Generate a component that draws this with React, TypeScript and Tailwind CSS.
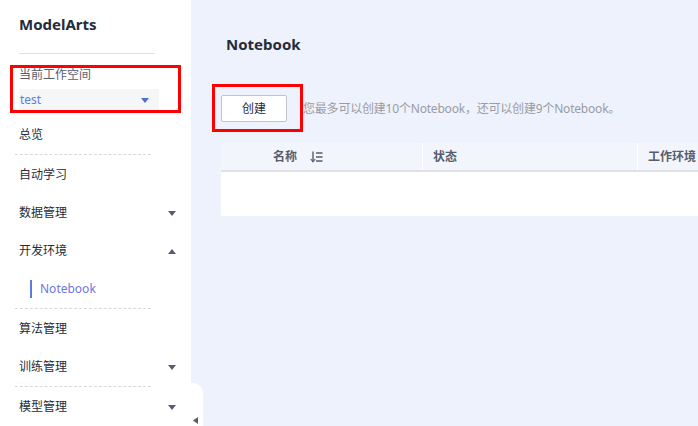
import React from "react";

const font = { fontFamily: '"Noto Sans", "Noto Sans CJK SC", sans-serif' };

const Caret = ({ up = false, className = "" }: { up?: boolean; className?: string }) => (
    <svg width="8" height="5" viewBox="0 0 8 5" className={className}>
        {up ? <path d="M0 5 L4 0 L8 5 Z" fill="currentColor" /> : <path d="M0 0 L8 0 L4 5 Z" fill="currentColor" />}
    </svg>
);

const NavItem = ({ label, caret }: { label: string; caret?: "up" | "down" }) => (
    <div className="h-[38px] flex items-center justify-between pl-[19px] pr-[15px] text-[12px] text-[#252b3a]">
        <span>{label}</span>
        {caret && <Caret up={caret === "up"} className="text-[#575d6c]" />}
    </div>
);

const Dashed = () => <div className="ml-[15px] w-[136px] border-t border-dashed border-[#d5d8de] mb-[1px]"></div>;

const App = () => {
    return (
        <div className="relative flex w-full h-[426px] overflow-hidden bg-[#eef2fc]" style={font}>
            {/* sidebar */}
            <div className="w-[191px] shrink-0 bg-white flex flex-col">
                <div className="h-[50px] flex items-center pl-[19px] text-[15px] font-bold text-[#252b3a]">ModelArts</div>
                <div className="ml-[19px] w-[136px] border-t border-[#dfe1e6] mt-[4px]"></div>
                <div className="pl-[19px] mt-[13px] text-[12px] text-[#575d6c] leading-[16px]">当前工作空间</div>
                <div className="ml-[19px] mt-[6px] w-[140px] h-[24px] bg-[#f5f6f7] flex items-center justify-between pl-[1px] pr-[10px]">
                    <span className="text-[12px] text-[#5e7ce0]">test</span>
                    <Caret className="text-[#526ecc]" />
                </div>
                <div className="mt-[4px]">
                    <NavItem label="总览" />
                    <Dashed />
                    <NavItem label="自动学习" />
                    <NavItem label="数据管理" caret="down" />
                    <NavItem label="开发环境" caret="up" />
                    <div className="h-[38px] flex items-center pl-[30px]">
                        <div className="w-[2px] h-[18px] bg-[#5e7ce0] mr-[8px]"></div>
                        <span className="text-[12px] text-[#6e76e0]">Notebook</span>
                    </div>
                    <Dashed />
                    <NavItem label="算法管理" />
                    <NavItem label="训练管理" caret="down" />
                    <Dashed />
                    <NavItem label="模型管理" caret="down" />
                </div>
            </div>

            {/* main */}
            <div className="flex-1 flex flex-col pl-[30px] overflow-hidden">
                <div className="h-[88px] pt-[33px] pl-[5px] text-[15px] font-bold text-[#252b3a] leading-[22px]">Notebook</div>
                <div className="flex items-center h-[27px] mt-[7px]">
                    <button className="w-[66px] h-[27px] bg-white border border-[#c0c4cc] rounded-[2px] text-[12px] text-[#252b3a]">创建</button>
                    <span className="ml-[16px] text-[12px] text-[#9a9ca3] whitespace-nowrap tracking-[-0.2px]">您最多可以创建10个Notebook，还可以创建9个Notebook。</span>
                </div>
                <div className="mt-[21px] w-[600px] shrink-0">
                    <div className="h-[29px] bg-[#f3f5fd] border-b-2 border-[#dfe1e6] flex text-[12px] font-bold text-[#575d6c]">
                        <div className="w-[41px]"></div>
                        <div className="w-[161px] flex items-center pl-[11px] border-r border-white">
                            <span>名称</span>
                            <svg width="13" height="12" viewBox="0 0 13 12" className="ml-[13px]">
                                <path d="M3 0.5 V10.5" stroke="#575d6c" strokeWidth="1.4" fill="none" />
                                <path d="M0.8 8 L3 10.8 L5.2 8" stroke="#575d6c" strokeWidth="1.2" fill="none" />
                                <path d="M6 2 H12.5 M6 6 H12.5 M6 10 H12.5" stroke="#575d6c" strokeWidth="1.6" fill="none" />
                            </svg>
                        </div>
                        <div className="w-[215px] flex items-center pl-[10px] border-r border-white">状态</div>
                        <div className="flex-1 flex items-center pl-[10px]">工作环境</div>
                    </div>
                    <div className="h-[44px] bg-white"></div>
                </div>
            </div>

            {/* collapse tab */}
            <div className="absolute left-[191px] top-[383px] w-[12px] h-[43px] bg-white rounded-tr-[10px]">
                <svg width="5" height="7" viewBox="0 0 5 7" className="absolute left-[2px] top-[34px]">
                    <path d="M5 0 L0 3.5 L5 7 Z" fill="#575d6c" />
                </svg>
            </div>

            {/* annotation boxes */}
            <div className="absolute left-[10px] top-[65px] w-[171px] h-[48px] border-[3px] border-[#ff0000]"></div>
            <div className="absolute left-[212px] top-[84px] w-[91px] h-[48px] border-[3px] border-[#ff0000]"></div>
        </div>
    );
};

export default App;
